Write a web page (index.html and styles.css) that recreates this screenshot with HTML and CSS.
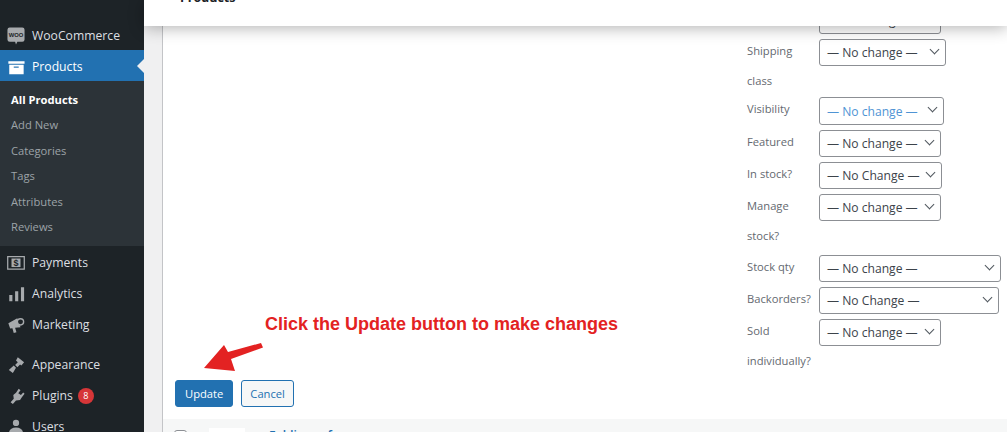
FILE: index.html
```html
<!DOCTYPE html>
<html lang="en">
<head>
    <meta charset="UTF-8">
    <title>Products</title>
    <link rel="stylesheet" href="styles.css">
</head>
<body>
    <div class="admin">
        <div class="sidebar">
            <div class="menu-top">
                <a class="menu-item" href="#">
                    <svg class="icon" viewBox="0 0 20 20"><path fill="#a7aaad" d="M3 .5h14a2.500 2.500 0 0 1 2.500 2.500v11a2.500 2.500 0 0 1-2.500 2.500h-5.500l-1.500 3-1-3H3A2.500 2.500 0 0 1 .5 14V3A2.500 2.500 0 0 1 3 .5z"/><text class="woo-mark" x="10" y="11.500" text-anchor="middle">WOO</text></svg>
                    <span>WooCommerce</span>
                </a>
                <a class="menu-item current" href="#">
                    <svg class="icon" viewBox="0 0 20 20"><path fill="#fff" d="M1.500 3.500h18v3h-18zM2.500 7.500h16V18h-16z"/><path fill="#2271b1" d="M7.500 9.500h5.500v1.300H7.500z"/></svg>
                    <span>Products</span>
                </a>
            </div>
            <div class="submenu">
                <a class="sub-item active" href="#">All Products</a>
                <a class="sub-item" href="#">Add New</a>
                <a class="sub-item" href="#">Categories</a>
                <a class="sub-item" href="#">Tags</a>
                <a class="sub-item" href="#">Attributes</a>
                <a class="sub-item" href="#">Reviews</a>
            </div>
            <div class="menu-group">
                <a class="menu-item" href="#">
                    <svg class="icon" viewBox="0 0 20 20"><path fill="none" stroke="#a7aaad" stroke-width="1.400" d="M.8 2.800h18.400v14H.8z"/><path fill="#a7aaad" d="M5 5h10v9.500H5z"/><text class="dollar" x="10" y="13" text-anchor="middle">$</text></svg>
                    <span>Payments</span>
                </a>
                <a class="menu-item" href="#">
                    <svg class="icon" viewBox="0 0 20 20"><path fill="#a7aaad" d="M2.500 11h3.500v7H2.500zM9 7h3.500v11H9zM15.500 2.500H19V18h-3.500z"/></svg>
                    <span>Analytics</span>
                </a>
                <a class="menu-item" href="#">
                    <svg class="icon" viewBox="0 0 20 20"><path fill="#a7aaad" d="M1.500 8l10-5.500 3.500 10-6 .5 1.500 5-3 1-1.500-5.500-2.500.5z"/><circle cx="15" cy="6.500" r="3.500" fill="#1d2327" stroke="#a7aaad" stroke-width="1.500"/></svg>
                    <span>Marketing</span>
                </a>
            </div>
            <div class="menu-group">
                <a class="menu-item" href="#">
                    <svg class="icon" viewBox="0 0 20 20"><path fill="#a7aaad" d="M12 1.500l7 5.500-3 3.500-1.500-1-3 3-2.500-2.500 3-3L10 5zM7.500 10.500l2.500 2.500-3.500 6-4.500-3.500z"/></svg>
                    <span>Appearance</span>
                </a>
                <a class="menu-item" href="#">
                    <svg class="icon" viewBox="0 0 20 20"><path fill="#a7aaad" d="M13 2l2 1.500-2.500 3.500 3 2 2.500-3 1.500 1.500-3 4-2 3-4.500.5-3.500 4-2.500-2 3.500-4-.5-4 3-2.500z"/></svg>
                    <span>Plugins</span>
                    <span class="badge">8</span>
                </a>
                <a class="menu-item" href="#">
                    <svg class="icon" viewBox="0 0 20 20"><circle cx="10" cy="5.500" r="3.500" fill="#a7aaad"/><path fill="#a7aaad" d="M2 18c0-5 3-7.500 8-7.500s8 2.500 8 7.500z"/></svg>
                    <span>Users</span>
                </a>
            </div>
        </div>
        <div class="main">
            <div class="topbar"><span class="page-title">Products</span></div>
            <div class="content">
                <div class="edit-panel">
                    <div class="fields">
                        <div class="field-list">
                            <div class="field">
                                <span class="label"></span>
                                <span class="select w122"><span>— No change —</span></span>
                            </div>
                            <div class="field shipping">
                                <span class="label">Shipping class</span>
                                <span class="select w127"><span>— No change —</span></span>
                            </div>
                            <div class="field">
                                <span class="label">Visibility</span>
                                <span class="select w125 blue"><span>— No change —</span></span>
                            </div>
                            <div class="field">
                                <span class="label">Featured</span>
                                <span class="select w122"><span>— No change —</span></span>
                            </div>
                            <div class="field">
                                <span class="label">In stock?</span>
                                <span class="select w123"><span>— No Change —</span></span>
                            </div>
                            <div class="field manage">
                                <span class="label">Manage stock?</span>
                                <span class="select w122"><span>— No change —</span></span>
                            </div>
                            <div class="field">
                                <span class="label">Stock qty</span>
                                <span class="select w182"><span>— No change —</span></span>
                            </div>
                            <div class="field">
                                <span class="label">Backorders?</span>
                                <span class="select w180"><span>— No Change —</span></span>
                            </div>
                            <div class="field">
                                <span class="label">Sold individually?</span>
                                <span class="select w122"><span>— No change —</span></span>
                            </div>
                        </div>
                    </div>
                    <div class="actions">
                        <a class="btn primary" href="#">Update</a>
                        <a class="btn" href="#">Cancel</a>
                    </div>
                    <!-- annotation added on the screenshot -->
                    <div class="note">Click the Update button to make changes</div>
                    <svg class="arrow" viewBox="0 0 60 30"><path fill="#e32222" d="M0 26L20 3l4 7L57 1l2 4.500L27 17l4 12z"/></svg>
                </div>
                <div class="next-row">
                    <span class="check"></span>
                    <span class="thumb"></span>
                    <span class="row-title">Folding sofa</span>
                </div>
            </div>
        </div>
    </div>
</body>
</html>
```

FILE: styles.css
```css
html, body {
    margin: 0;
    height: 432px;
    overflow: hidden;
}
body {
    font-family: "Open Sans", "Noto Sans", sans-serif;
    font-size: 13px;
    background-color: #f0f0f1;
    color: #50575e;
}
a {
    text-decoration: none;
}
.admin {
    display: flex;
    height: 432px;
    overflow: hidden;
}

/* left menu */
.sidebar {
    width: 144px;
    flex: none;
    background-color: #1d2327;
    padding-top: 19px;
    box-sizing: border-box;
}
.menu-top {
    display: flex;
    flex-direction: column;
}
.menu-item {
    display: flex;
    align-items: center;
    height: 31px;
    box-sizing: border-box;
    padding: 2px 0 0 7px;
    color: #dcdfe1;
    font-size: 12.200px;
    position: relative;
}
.menu-item .icon {
    width: 18px;
    height: 18px;
    margin-right: 7px;
    flex: none;
}
.woo-mark {
    font-family: "Liberation Sans", sans-serif;
    font-size: 6.500px;
    font-weight: 700;
    fill: #1d2327;
}
.dollar {
    font-family: "Liberation Sans", sans-serif;
    font-size: 10px;
    font-weight: 700;
    fill: #1d2327;
}
.menu-item.current {
    background-color: #2271b1;
    color: #fff;
}
.menu-item.current::after {
    content: '';
    position: absolute;
    right: 0;
    top: 9px;
    border-top: 7px solid transparent;
    border-bottom: 7px solid transparent;
    border-right: 7px solid #f0f0f1;
}
.submenu {
    background-color: #2c3338;
    padding: 6px 0 7px;
    display: flex;
    flex-direction: column;
}
.sub-item {
    height: 25.400px;
    line-height: 25px;
    padding-left: 11px;
    font-size: 11.200px;
    color: #9da3a8;
}
.sub-item.active {
    color: #fff;
    font-weight: 700;
}
.menu-group {
    margin-bottom: 9px;
}
.badge {
    display: inline-block;
    width: 16px;
    height: 16px;
    line-height: 16px;
    border-radius: 50%;
    margin-left: 5px;
    background-color: #d63638;
    color: #fff;
    font-size: 9px;
    text-align: center;
}

/* main area */
.main {
    flex: 1;
    min-width: 0;
    display: flex;
    flex-direction: column;
    position: relative;
}
.topbar {
    height: 26px;
    flex: none;
    background-color: #fff;
    box-shadow: 0 2px 16px rgba(0, 0, 0, 0.3);
    position: relative;
    z-index: 2;
    padding-left: 36px;
    overflow: hidden;
}
.page-title {
    display: block;
    margin-top: -12px;
    font-size: 12.500px;
    font-weight: 700;
    line-height: 20px;
    color: #1d2327;
}
.content {
    flex: 1;
    margin-left: 18px;
    border-left: 1px solid #c3c4c7;
    background-color: #fff;
}
.edit-panel {
    position: relative;
    height: 393px;
}
.fields {
    display: flex;
    justify-content: flex-end;
}
.field-list {
    width: 260px;
    margin-top: -22px;
}
.field {
    display: flex;
    align-items: flex-start;
    margin-bottom: 2px;
    min-height: 30px;
}
.field.shipping {
    margin-bottom: -2px;
}
.field.manage {
    margin-bottom: 1px;
}
.label {
    width: 72px;
    flex: none;
    font-size: 11.200px;
    line-height: 30px;
    color: #646970;
}
.select {
    display: flex;
    align-items: center;
    height: 27px;
    margin-top: 3px;
    box-sizing: border-box;
    padding-left: 7px;
    border: 1px solid #8c8f94;
    border-radius: 3px;
    background-color: #fff;
    color: #3c434a;
    font-size: 12.100px;
    position: relative;
}
.select::after {
    content: '';
    position: absolute;
    right: 7px;
    top: 6px;
    width: 6px;
    height: 6px;
    border-right: 1.500px solid #50575e;
    border-bottom: 1.500px solid #50575e;
    transform: rotate(45deg);
}
.select.blue {
    height: 28px;
    color: #4f94d4;
}
.w122 { width: 122px; }
.w123 { width: 123px; }
.w125 { width: 125px; }
.w127 { width: 127px; }
.w180 { width: 180px; }
.w182 { width: 182px; }

.actions {
    position: absolute;
    left: 12px;
    top: 354px;
    display: flex;
    gap: 8px;
}
.btn {
    display: block;
    height: 27px;
    line-height: 25px;
    box-sizing: border-box;
    padding: 0 8px;
    border: 1px solid #2271b1;
    border-radius: 3px;
    background-color: #f6f7f7;
    color: #2271b1;
    font-size: 11.200px;
}
.btn.primary {
    padding: 0 9px;
    background-color: #2271b1;
    color: #fff;
}
.note {
    position: absolute;
    left: 102px;
    top: 288px;
    font-family: "Liberation Sans", Arial, sans-serif;
    font-size: 18px;
    font-weight: 700;
    color: #e32222;
}
.arrow {
    position: absolute;
    left: 41px;
    top: 316px;
    width: 60px;
    height: 30px;
}
.next-row {
    height: 40px;
    background-color: #f6f7f7;
    display: flex;
    align-items: flex-start;
    padding: 11px 0 0 11px;
    box-sizing: border-box;
}
.check {
    width: 11px;
    height: 11px;
    flex: none;
    border: 1px solid #8c8f94;
    border-radius: 3px;
    background-color: #fff;
}
.thumb {
    width: 36px;
    height: 36px;
    flex: none;
    margin: -2px 24px 0 22px;
    background-color: #fff;
}
.row-title {
    margin-top: -3px;
    color: #2271b1;
    font-weight: 600;
    font-size: 12px;
}
```
